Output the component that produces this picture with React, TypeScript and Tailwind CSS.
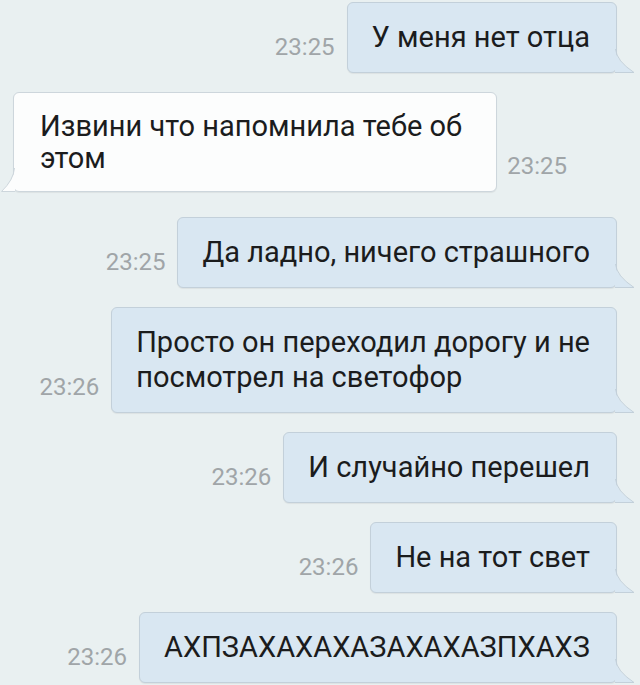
import type { ReactNode } from 'react';

type Msg = { out: boolean; time: string; text: ReactNode };

const messages: Msg[] = [
    { out: true, time: '23:25', text: 'У меня нет отца' },
    { out: false, time: '23:25', text: <>Извини что напомнила тебе об<br />этом</> },
    { out: true, time: '23:25', text: 'Да ладно, ничего страшного' },
    { out: true, time: '23:26', text: <>Просто он переходил дорогу и не<br />посмотрел на светофор</> },
    { out: true, time: '23:26', text: 'И случайно перешел' },
    { out: true, time: '23:26', text: 'Не на тот свет' },
    { out: true, time: '23:26', text: 'АХПЗАХАХАХАЗАХАХАЗПХАХЗ' },
];

function Tail({ out }: { out: boolean }) {
    // little corner flare of the bubble, drawn over its edge
    if (out) {
        return (
            <svg className="absolute -right-[19px] -bottom-px" width="20" height="24" viewBox="0 0 20 24">
                <path d="M0 0 Q1 12 19 23.5 L0 23.5 Z" fill="#d9e7f2" />
                <path d="M0.5 0 Q1.5 12 19 23.5 L0 23.5" fill="none" stroke="#c3d0da" strokeWidth="1" />
            </svg>
        );
    }
    return (
        <svg className="absolute -left-[13px] -bottom-px" width="14" height="24" viewBox="0 0 14 24">
            <path d="M14 0 Q13 12 0 23.5 L14 23.5 Z" fill="#fcfdfd" />
            <path d="M13.5 0 Q12.5 12 0.5 23.5 L14 23.5" fill="none" stroke="#cdd6dc" strokeWidth="1" />
        </svg>
    );
}

function Bubble({ msg }: { msg: Msg }) {
    const time = (
        <span className="text-[24px] leading-none text-[#a0a5a8] mb-[14px]">{msg.time}</span>
    );
    const bubble = (
        <div
            className={
                msg.out
                    ? 'relative rounded-[6px] border border-[#c3d0da] bg-[#d9e7f2] pl-[24px] pr-[26px] py-[17px] text-[29px] leading-[35px] text-[#1b1c1d] shadow-[0_1px_1px_rgba(0,0,0,0.06)]'
                    : 'relative rounded-[6px] border border-[#cdd6dc] bg-[#fcfdfd] pl-[26px] pr-[34px] py-[17px] text-[29px] leading-[32px] text-[#1b1c1d] shadow-[0_1px_1px_rgba(0,0,0,0.06)]'
            }
        >
            {msg.text}
            <Tail out={msg.out} />
        </div>
    );
    if (msg.out) {
        return (
            <div className="flex items-end justify-end gap-[12px] pr-[23px]">
                {time}
                {bubble}
            </div>
        );
    }
    return (
        <div className="flex items-end justify-between pl-[13px] pr-[73px] mb-[6px]">
            {bubble}
            {time}
        </div>
    );
}

export default function App() {
    return (
        <div
            className="w-[640px] h-[685px] overflow-hidden bg-[#e9f0f1] pt-[2px] flex flex-col gap-[19px]"
            style={{ fontFamily: 'Roboto, "Liberation Sans", sans-serif' }}
        >
            {messages.map((m, i) => (
                <Bubble key={i} msg={m} />
            ))}
        </div>
    );
}
